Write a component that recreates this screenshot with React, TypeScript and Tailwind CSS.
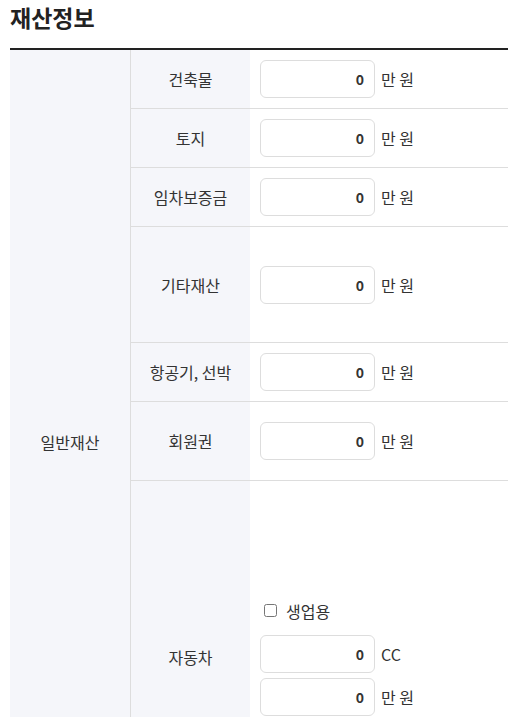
import React from 'react';

const font = { fontFamily: '"Noto Sans CJK KR", "Noto Sans", sans-serif' };

function MoneyInput({ unit = '만 원' }: { unit?: string }) {
  return (
    <div className="flex items-center">
      <input
        readOnly
        value="0"
        className="w-[115px] h-[38px] rounded-[6px] border border-[#dddddd] bg-white pr-[10px] text-right text-[14px] font-bold text-[#333] outline-none"
      />
      <span className="ml-[6px] text-[16px] text-[#333]">{unit}</span>
    </div>
  );
}

function Row({ label, height, children }: { label: string; height: number; children: React.ReactNode }) {
  return (
    <div className="flex border-b border-[#dddddd]" style={{ height }}>
      <div className="w-[119px] shrink-0 bg-[#f5f6fa] flex items-center justify-center text-[16px] text-[#333]">
        {label}
      </div>
      <div className="flex-1 flex items-center pl-[10px]">{children}</div>
    </div>
  );
}

export default function App() {
  const rows = [
    { label: '건축물', h: 59 },
    { label: '토지', h: 59 },
    { label: '임차보증금', h: 59 },
    { label: '기타재산', h: 116 },
    { label: '항공기, 선박', h: 59 },
    { label: '회원권', h: 79 },
  ];

  return (
    <div className="min-h-screen bg-white pl-[10px] overflow-hidden" style={font}>
      <h1 className="text-[23px] font-bold leading-[34px] text-[#222] mb-[14px]">재산정보</h1>

      <div className="flex border-t-2 border-[#222]">
        <div className="w-[121px] shrink-0 bg-[#f5f6fa] border-r border-[#dddddd] flex items-center justify-center text-[16px] text-[#333]">
          일반재산
        </div>
        <div className="flex-1">
          {rows.map((r) => (
            <Row key={r.label} label={r.label} height={r.h}>
              <MoneyInput />
            </Row>
          ))}
          <div className="flex" style={{ height: 352 }}>
            <div className="w-[119px] shrink-0 bg-[#f5f6fa] flex items-center justify-center text-[16px] text-[#333]">
              자동차
            </div>
            <div className="flex-1 flex flex-col justify-center pl-[10px]">
              <label className="flex items-center gap-[9px] text-[16px] text-[#333] ml-[4px] mb-[12px]">
                <input type="checkbox" className="w-[13px] h-[13px] m-0" />
                생업용
              </label>
              <MoneyInput unit="CC" />
              <div className="h-[5px]" />
              <MoneyInput />
            </div>
          </div>
        </div>
      </div>
    </div>
  );
}
